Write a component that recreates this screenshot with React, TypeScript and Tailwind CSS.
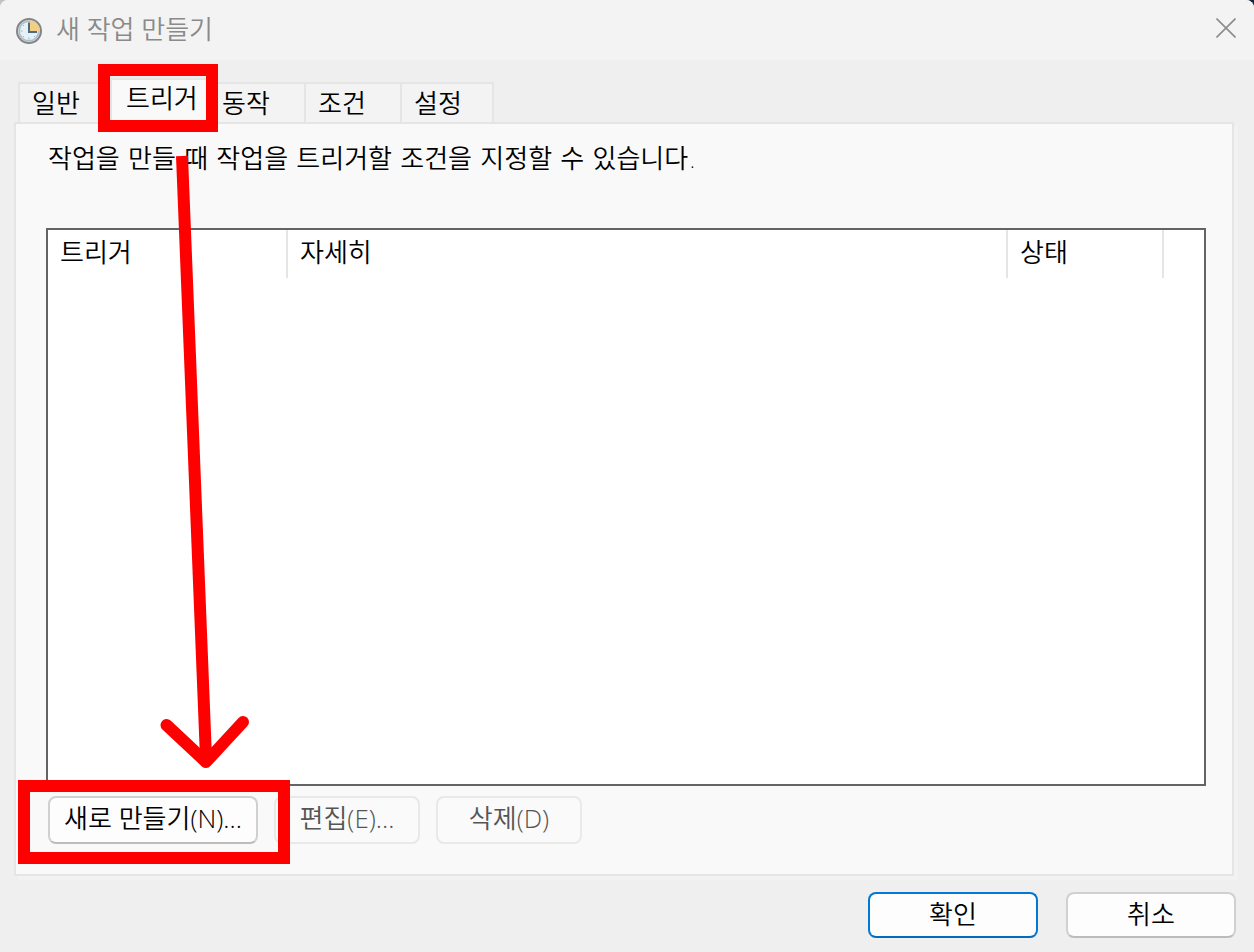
import React, { useState } from 'react';

const TABS = ['일반', '트리거', '동작', '조건', '설정'];

function ClockIcon() {
  return (
    <svg className="w-[26px] h-[26px] shrink-0" viewBox="0 0 26 26" aria-hidden="true">
      <circle cx="13" cy="13" r="12" fill="#d9dcde" stroke="#858585" strokeWidth="2" />
      <circle cx="13" cy="13" r="9.800" fill="#e6f1f6" stroke="#a9bfca" strokeWidth="1.5" />
      <path d="M14 13V2.500A10.500 10.500 0 0 1 24 13Z" fill="#f2cf86" />
      <path d="M4.500 13h2M13 19.500v2M7 7l1 1M7 19l1-1M19 19l-1-1" stroke="#9fb4bf" strokeWidth="1" />
      <path d="M13 4.500v9.500H21" stroke="#4d6b7c" strokeWidth="2" fill="none" />
    </svg>
  );
}

function CloseIcon() {
  return (
    <svg className="w-5 h-5" viewBox="0 0 20 20" aria-hidden="true">
      <path d="M0.500 0.500L19.500 19.500M19.500 0.500L0.500 19.500" stroke="#8c8c8c" strokeWidth="1.600" />
    </svg>
  );
}

export default function App() {
  const [activeTab, setActiveTab] = useState('트리거');

  return (
    <div className="min-h-screen flex flex-col bg-linear-to-r from-[#c4c2c0] to-[#14253f]">
      <div
        role="dialog"
        aria-labelledby="dialog-title"
        className="relative flex-1 flex flex-col rounded-t-lg bg-[#efefef] text-black text-[26px] leading-8 font-[350] font-['Open_Sans','Noto_Sans_CJK_KR',sans-serif]"
      >
        {/* Title bar */}
        <header className="h-[60px] shrink-0 flex items-center justify-between rounded-t-lg bg-[#f3f3f3] pt-0.5 pl-4 pr-[18px]">
          <div className="flex items-center gap-[14px]">
            <ClockIcon />
            <h1 id="dialog-title" className="pb-1 text-[#8a8a8a]">새 작업 만들기</h1>
          </div>
          <button type="button" aria-label="닫기" className="pb-[6px]">
            <CloseIcon />
          </button>
        </header>

        {/* Tabs */}
        <div role="tablist" className="h-16 shrink-0 flex items-end pl-[18px]">
          {TABS.map((tab, i) => {
            const active = tab === activeTab;
            return (
              <div key={tab} className={`relative w-24 last:w-[92px] ${active ? 'z-10' : ''}`}>
                <button
                  type="button"
                  role="tab"
                  aria-selected={active}
                  onClick={() => setActiveTab(tab)}
                  className={
                    active
                      ? 'block h-[46px] w-[100px] -ml-1 border-2 border-b-0 border-[#e5e5e5] bg-[#f9f9f9] pl-[14px] pb-2 text-left'
                      : `block h-[42px] w-full border-y-2 border-r-2 border-[#e5e5e5] bg-[#f3f3f3] pl-3 text-left ${i === 0 ? 'border-l-2' : ''}`
                  }
                >
                  {tab}
                </button>
                {tab === '트리거' && (
                  <div className="absolute -top-[14px] -left-4 w-[120px] h-[68px] border-[12px] border-[#ff0000] pointer-events-none" />
                )}
              </div>
            );
          })}
        </div>

        {/* Tab page */}
        <main
          role="tabpanel"
          className="-mt-0.5 ml-[14px] mr-5 flex-1 flex flex-col border-2 border-[#e5e5e5] bg-[#f9f9f9] pl-[30px] pr-[26px] pt-[19px] pb-[30px] shadow-[4px_4px_0_#f2f2f2]"
        >
          <p className="pl-0.5 font-['DejaVu_Sans','Noto_Sans_CJK_KR',sans-serif]">
            작업을 만들 때 작업을 트리거할 조건을 지정할 수 있습니다.
          </p>

          <div className="mt-[53px] flex-1 border-2 border-[#646464] bg-white">
            <table className="w-full table-fixed border-collapse">
              <colgroup>
                <col className="w-60" />
                <col />
                <col className="w-[156px]" />
                <col className="w-10" />
              </colgroup>
              <thead>
                <tr className="h-12 text-left">
                  <th className="p-0 font-[350]">
                    <div className="h-12 border-r-2 border-[#e5e5e5] pl-3 pt-[6px]">트리거</div>
                  </th>
                  <th className="p-0 font-[350]">
                    <div className="h-12 border-r-2 border-[#e5e5e5] pl-3 pt-[6px]">자세히</div>
                  </th>
                  <th className="p-0 font-[350]">
                    <div className="h-12 border-r-2 border-[#e5e5e5] pl-3 pt-[6px]">상태</div>
                  </th>
                  <td />
                </tr>
              </thead>
              <tbody />
            </table>
          </div>

          <div className="mt-[10px] ml-0.5 flex gap-4">
            <div className="relative">
              <button
                type="button"
                className="block w-[210px] h-12 rounded-lg border-2 border-[#d0d0d0] border-b-[#bcbcbc] bg-[#fdfdfd] pb-1 whitespace-nowrap"
              >
                새로 만들기(N)...
              </button>
              <div className="absolute -top-4 -left-[30px] z-10 w-[272px] h-[84px] border-[12px] border-[#ff0000] pointer-events-none" />
            </div>
            <button type="button" disabled className="w-[146px] h-12 rounded-lg border-2 border-[#e9e9e9] bg-[#fafafa] pb-1 text-[#555555]">
              편집(E)...
            </button>
            <button type="button" disabled className="w-[146px] h-12 rounded-lg border-2 border-[#e9e9e9] bg-[#fafafa] pb-1 text-[#555555]">
              삭제(D)
            </button>
          </div>
        </main>

        {/* Dialog buttons */}
        <footer className="flex justify-end gap-7 pt-4 pb-[14px] pr-[18px]">
          <button type="button" className="w-[170px] h-[46px] rounded-lg border-2 border-[#0078d4] border-b-[#006cbe] bg-[#fdfdfd] pb-0.5">
            확인
          </button>
          <button type="button" className="w-[170px] h-[46px] rounded-lg border-2 border-[#d0d0d0] border-b-[#bcbcbc] bg-[#fdfdfd] pb-0.5">
            취소
          </button>
        </footer>

        {/* Arrow from the trigger tab down to the new button */}
        <svg
          className="absolute left-40 top-[150px] z-20 w-[90px] h-[620px] pointer-events-none"
          viewBox="0 0 90 620"
          fill="none"
          stroke="#ff0000"
          strokeWidth="12"
          aria-hidden="true"
        >
          <path d="M22 6L46 608" />
          <path d="M6.500 575L46 612L83 572" strokeLinecap="round" strokeLinejoin="round" />
        </svg>
      </div>
    </div>
  );
}
